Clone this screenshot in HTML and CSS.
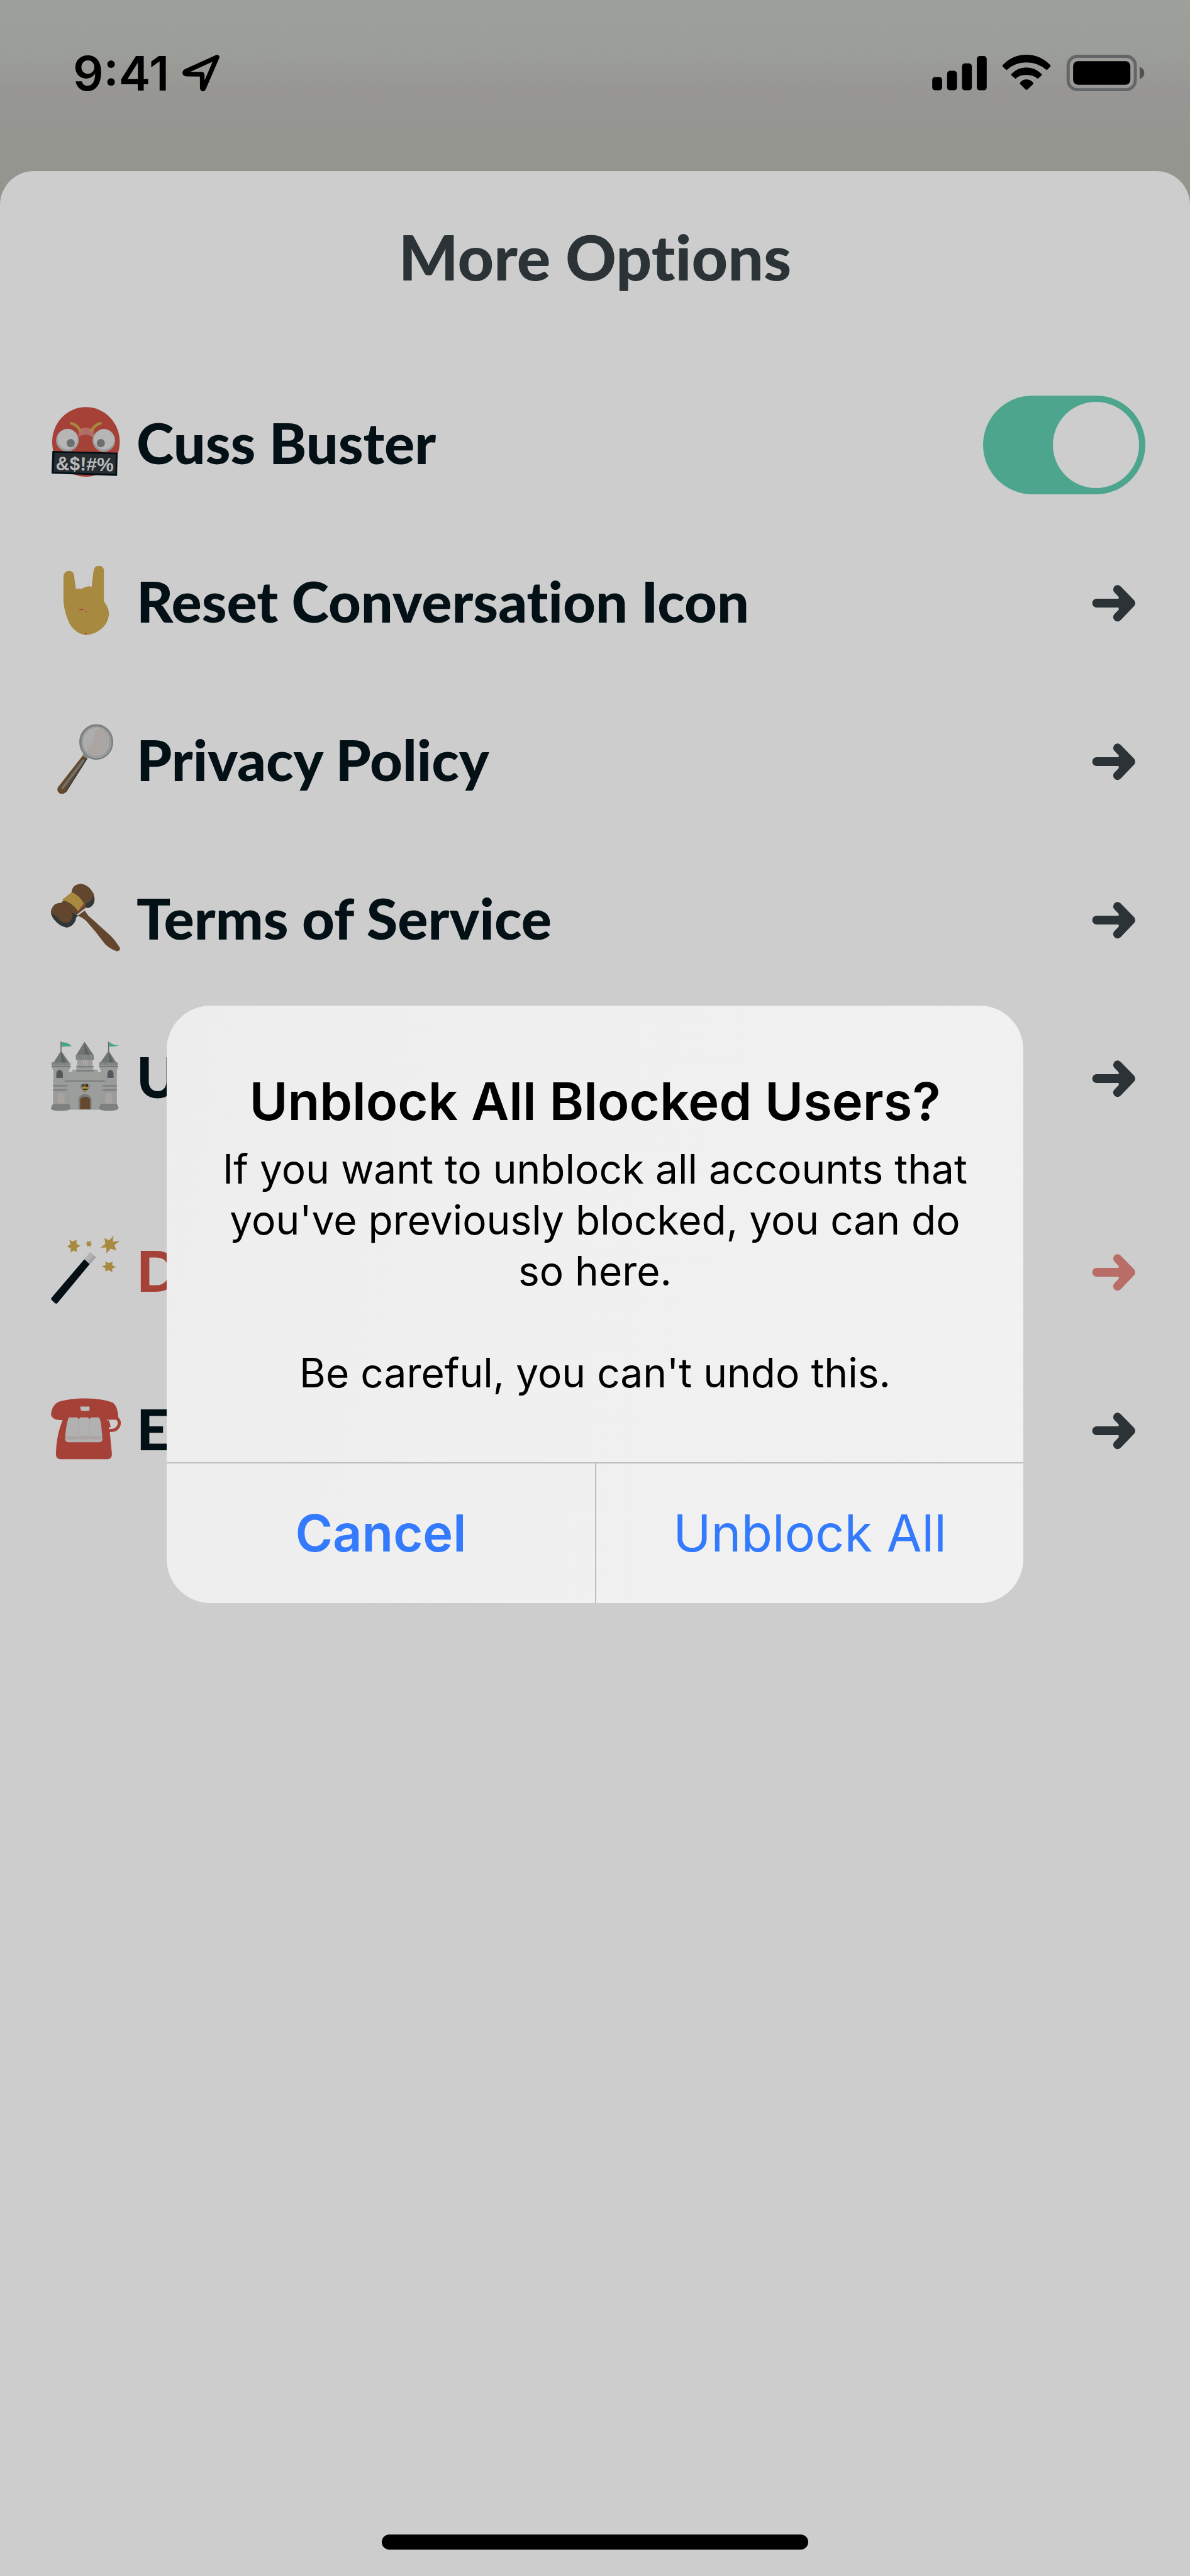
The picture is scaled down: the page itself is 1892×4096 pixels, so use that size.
FILE: index.html
```html
<!DOCTYPE html>
<html lang="en">
<head>
<meta charset="utf-8">
<meta name="viewport" content="width=device-width, initial-scale=1">
<title>More Options</title>
<link rel="stylesheet" href="styles.css">
</head>
<body>
<svg class="defs" aria-hidden="true">
  <symbol id="arrow" viewBox="0 0 86 60">
    <path d="M7.600 30H60M41.300 8L62.800 30L41.300 52.500M50 22V38" fill="none" stroke="currentColor" stroke-width="14" stroke-linecap="round" stroke-linejoin="round"/>
  </symbol>
</svg>

<div class="screen">
  <header class="status">
    <div class="status-time">
      <span>9:41</span>
      <svg class="location" viewBox="294 88 62 62" aria-hidden="true"><path d="M351 93L300 116Q297 119.500 302 120.300L325.500 120.500Q327 120.500 327 122L327.200 143Q328 146 329.500 143Z" fill="none" stroke="#000" stroke-width="7.500" stroke-linejoin="round"/></svg>
    </div>
    <svg class="indicators" viewBox="1505 86 343 64" role="img" aria-label="Signal, Wi-Fi and battery">
      <rect x="1505" y="124" width="16" height="21.500" rx="5"/>
      <rect x="1529" y="114" width="16" height="31.500" rx="5"/>
      <rect x="1553" y="102" width="16" height="43.500" rx="5"/>
      <rect x="1577" y="90" width="16" height="55.500" rx="5"/>
      <path d="M1619 104.500Q1635 88 1657 88T1695.500 104.500Q1696.800 106 1695.500 107.500L1690 113Q1676 100.500 1657 100.500T1625 113L1619 107.500Q1617.500 106 1619 104.500Z"/>
      <path d="M1633 119Q1643 108.500 1657 108.500T1681.500 119Q1682.500 120.300 1681.500 121.500L1675.500 127Q1668 120.500 1657 120.500T1639.500 127L1633 121.500Q1632 120.300 1633 119Z"/>
      <path d="M1647 133Q1651 128 1657.200 128T1668 133Q1669 134.300 1668 135.500L1658.500 144.500Q1657.300 145.500 1656 144.500L1647 135.500Q1645.800 134.300 1647 133Z"/>
      <rect x="1724.500" y="90.500" width="108.500" height="54" rx="15" fill="none" stroke="#636566" stroke-width="5"/>
      <rect x="1732.500" y="98.500" width="92.500" height="38" rx="8"/>
      <path d="M1840 107.500Q1847.500 110.500 1847.500 117.500T1840 127.500Z" fill="#4f5152"/>
    </svg>
  </header>

  <main class="sheet">
    <h1>More Options</h1>
    <nav class="options">
      <div class="row">
        <label class="name" for="cuss">
          <svg class="emoji" viewBox="60 105 348 348" aria-hidden="true">
            <ellipse cx="236" cy="278" rx="164" ry="169" fill="#a64138"/>
            <path d="M200 222Q236 196 274 222V258Q258 244 236 243T200 256Z" fill="#b06d68"/>
            <circle cx="146" cy="270" r="55" fill="#9d9d9d"/><circle cx="147" cy="264" r="49" fill="#b6b6b6"/>
            <circle cx="323" cy="271" r="55" fill="#9d9d9d"/><circle cx="324" cy="265" r="49" fill="#b6b6b6"/>
            <circle cx="162" cy="284" r="20" fill="#6c6e6f"/><circle cx="308" cy="284" r="20" fill="#6c6e6f"/>
            <path d="M165 188Q190 193 208 222M306 188Q281 193 264 222" fill="none" stroke="#a88b3f" stroke-width="13" stroke-linecap="round"/>
            <path d="M73 322L390 330L387 443L69 432Z" fill="#041016"/>
            <path d="M84 331L381 338L379 433L79 424Z" fill="#252d31"/>
            <text class="cuss" x="230" y="417" transform="rotate(1.500 230 385)">&amp;$!#%</text>
          </svg>
          <span>Cuss Buster</span>
        </label>
        <input class="switch" id="cuss" type="checkbox" role="switch" checked>
      </div>
      <a class="row" href="#reset">
        <span class="name">
          <svg class="emoji" viewBox="60 93 348 348" aria-hidden="true">
            <path d="M127 150Q129 124 153 123T179 150L187 209H217Q240 193 264 200L272 128Q274 98 299 98T323 124V270Q348 302 348 335Q342 382 306 408Q272 433 235 433Q190 430 158 382Q134 335 127 275Z" fill="#a78a3f"/>
            <path d="M204 311H224M234 321H240" stroke="#a6403d" stroke-width="5"/><path d="M230 428H240" stroke="#a6403d" stroke-width="5"/>
          </svg>
          <span>Reset Conversation Icon</span>
        </span>
        <svg class="arrow" aria-hidden="true"><use href="#arrow"/></svg>
      </a>
      <a class="row" href="#privacy">
        <span class="name">
          <svg class="emoji" viewBox="60 81 348 348" aria-hidden="true">
            <path d="M222 236L242 250L138 415Q126 429 109 421Q93 412 99 393Z" fill="#65482d"/>
            <path d="M241 252L137 416" stroke="#343b3e" stroke-width="5"/>
            <path d="M223 262L122 396" stroke="#6f7372" stroke-width="11" stroke-linecap="round"/>
            <path d="M217 236L228 224L252 240L242 252Z" fill="#8b8f8d"/>
            <ellipse cx="286" cy="172" rx="74" ry="78" fill="#adadad" stroke="#7c8080" stroke-width="17"/>
            <ellipse cx="287" cy="173" rx="70" ry="74" fill="none" stroke="#a0a3a1" stroke-width="6"/>
            <path d="M300 108Q354 125 346 180Q334 230 286 240Q248 238 236 200Q265 185 278 160Q268 122 300 108Z" fill="#aaa5a3"/>
          </svg>
          <span>Privacy Policy</span>
        </span>
        <svg class="arrow" aria-hidden="true"><use href="#arrow"/></svg>
      </a>
      <a class="row" href="#terms">
        <span class="name">
          <svg class="emoji" viewBox="60 69 348 348" aria-hidden="true">
            <path d="M196 234L230 209L246 232L352 328Q376 350 402 392Q400 407 385 406Q340 390 318 358Q285 312 245 268Q225 245 196 234Z" fill="#62472e"/>
            <path d="M166 120Q170 82 212 79Q250 84 272 125Q288 170 262 189Q250 199 236 194L180 238Q194 238 184 260Q170 288 142 291Q108 286 80 251Q60 222 68 203Q80 170 116 171Z" fill="#62472e"/>
            <path d="M236 175Q262 166 272 140Q282 170 262 189Q250 199 236 194ZM68 217Q95 238 116 262Q148 278 162 255Q176 240 166 219L200 234Q185 240 184 260Q170 288 142 291Q108 286 80 251Q68 234 68 217Z" fill="#313638"/>
            <path d="M120 157L167 120Q204 133 226 175L198 213Q172 170 120 157Z" fill="#a78a40"/>
            <path d="M198 213L226 179" stroke="#a6403a" stroke-width="4"/>
          </svg>
          <span>Terms of Service</span>
        </span>
        <svg class="arrow" aria-hidden="true"><use href="#arrow"/></svg>
      </a>
      <a class="row" href="#unblock">
        <span class="name">
          <svg class="emoji" viewBox="60 87 348 348" aria-hidden="true">
            <path d="M115 94V142M346 94V142" stroke="#696c6c" stroke-width="5"/>
            <path d="M118 96Q150 96 167 116L118 118ZM349 96Q366 110 398 114L349 119Z" fill="#46a58a"/>
            <path d="M115 138L158 200H76ZM229 94L274 160H188ZM346 138L386 200H303Z" fill="#717474"/>
            <path d="M115 142L140 198H118ZM229 100L252 156H230ZM346 142L370 198H348Z" fill="#5d6161"/>
            <path d="M135 240H170V230H186V242H274V230H294V242H325V424H135Z" fill="#9b9e9b"/>
            <path d="M187 158H275V182H268V224H273V246H188V224H194V182H187Z" fill="#999c9a"/>
            <path d="M70 196H161V218L153 236L158 400H76L78 236L70 218ZM301 196H391V218L386 236V400H306L308 236L301 218Z" fill="#9a9c9b"/>
            <path d="M98 345H132V398H98ZM330 345H364V398H330ZM218 182H245V210H218Z" fill="#a8a2a1"/>
            <path d="M70 202H161M301 202H391M187 165H275" stroke="#7a7d7d" stroke-width="15" stroke-dasharray="8 3"/>
            <path d="M72 215H160M303 215H389M190 178H273M190 216H272M190 236H272M78 308H142M78 329H142M320 308H384M320 329H384M135 285H325" stroke="#757979" stroke-width="6" stroke-linecap="round"/>
            <path d="M76 395H154L163 416Q160 430 112 430T66 416ZM308 395H386L395 416Q390 430 346 430T299 416Z" fill="#7d8080"/>
            <path d="M92 270V250Q94 231 108 231T124 250V270ZM340 270V250Q342 231 355 231T370 250V270Z" fill="#54585a"/>
            <path d="M200 422V372Q205 349 231 349T263 372V422Z" fill="#7b7d7b"/>
            <path d="M208 422V375Q212 361 231 361T256 375V422Z" fill="#65492e"/>
            <path d="M207 304Q220 303 231 294Q242 303 255 304Q253 327 231 341Q210 328 207 304Z" fill="#777a78"/>
            <path d="M215 306L231 300L248 306Q248 325 231 338Q216 328 215 306Z" fill="#ad8838"/>
            <path d="M216 301L231 303L246 299V313H234V307H228V311H217ZM222 323H242V328H222Z" fill="#34302a"/>
          </svg>
          <span>U</span>
        </span>
        <svg class="arrow" aria-hidden="true"><use href="#arrow"/></svg>
      </a>
      <a class="row danger" href="#delete">
        <span class="name">
          <svg class="emoji" viewBox="60 94 348 348" aria-hidden="true">
            <path d="M229 216L255 240L96 431Q90 434 84 429L68 413Q66 408 69 404Z" fill="#041016"/>
            <path d="M256 182L286 208L256 242L228 217Z" fill="#b2b2b2"/><path d="M284 207L254 240L244 231L274 199Z" fill="#a3a3a3"/>
            <path d="M155 122L172 131L190 122V142L209 152L190 163L193 182L177 174L161 185L163 164L144 155L161 144Z" fill="#a78a40"/>
            <path d="M370 102L366 132L401 127L374 148L383 174L356 166L335 189L335 160L307 161L330 142L326 114L348 126Z" fill="#a78a40"/>
            <path d="M240 128L250 132L261 126L259 138L265 144L258 148L259 157L250 152L240 155L242 146L235 141L242 137Z" fill="#a78a40"/>
            <path d="M330 228L348 235L365 229L363 246L382 255L363 263L364 280L347 270L329 276L331 260L311 252L332 246Z" fill="#a78a40"/>
          </svg>
          <span>D</span>
        </span>
        <svg class="arrow" aria-hidden="true"><use href="#arrow"/></svg>
      </a>
      <a class="row" href="#email">
        <span class="name">
          <svg class="emoji" viewBox="60 81 348 348" aria-hidden="true">
            <path d="M341 218Q348 232 350 250" fill="none" stroke="#a64138" stroke-width="12"/>
            <path d="M388 208Q402 222 396 240Q388 268 348 266" fill="none" stroke="#a64138" stroke-width="15"/>
            <path d="M66 190Q70 142 104 126Q160 110 235 110T366 130Q392 150 393 205L385 214H338Q346 240 352 275L362 380Q362 404 342 405H110Q90 402 90 380Q92 290 123 215Q74 218 66 190Z" fill="#a64138"/>
            <path d="M208 150H253V168Q250 171 231 171T211 167Z" fill="#bdbdbd"/>
            <path d="M152 202H195L201 212L208 202H247L253 212L260 202H300Q308 218 310 238L316 306Q316 322 300 323H150Q135 321 135 306Q138 240 152 202Z" fill="#b1b1b1"/>
            <path d="M140 292H194L201 299L208 292H247L253 299L260 292H313V304L300 310H264L253 305L242 310H214L203 305L192 310H148L138 302Z" fill="#aaa4a3"/>
            <path d="M201 210Q195 222 201 235T201 265T201 290M253 210Q259 222 253 235T253 265T253 290" fill="none" stroke="#a5a5a5" stroke-width="3"/>
          </svg>
          <span>E</span>
        </span>
        <svg class="arrow" aria-hidden="true"><use href="#arrow"/></svg>
      </a>
    </nav>
    <div class="home-indicator"></div>
  </main>
</div>

<div class="overlay">
  <section class="alert" role="alertdialog" aria-labelledby="alert-title" aria-describedby="alert-text">
    <div class="alert-body">
      <h2 id="alert-title">Unblock All Blocked Users?</h2>
      <div class="message" id="alert-text">
        <p>If you want to unblock all accounts that you've previously blocked, you can do so here.</p>
        <p>Be careful, you can't undo this.</p>
      </div>
    </div>
    <div class="actions">
      <button class="cancel" type="button">Cancel</button>
      <button class="confirm" type="button">Unblock All</button>
    </div>
  </section>
</div>
</body>
</html>
```
FILE: styles.css
```css
* {
  box-sizing: border-box;
}

body {
  margin: 0;
  color: #000;
  font-family: Inter, "Liberation Sans", sans-serif;
}

h1,
h2,
p {
  margin: 0;
}

.defs {
  display: none;
}

.screen {
  display: flex;
  flex-direction: column;
  min-height: 100vh;
  background: linear-gradient(#9da09b 0, #9b9d98 90px, #979694 150px, #94968f 230px, #92948d 330px);
}

/* Status bar */
.status {
  display: flex;
  align-items: center;
  justify-content: space-between;
  height: 272px;
  padding: 0 72px 40px 116px;
}

.status-time {
  display: flex;
  align-items: center;
  gap: 20px;
  font-size: 76px;
  font-weight: 600;
  line-height: 96px;
}

.location {
  width: 61px;
  height: 61px;
}

.indicators {
  width: 338px;
  height: 63px;
}

/* Sheet */
.sheet {
  display: flex;
  flex: 1;
  flex-direction: column;
  padding-top: 75px;
  border-radius: 54px 54px 0 0;
  background: #cdcdcd;
  font-variant-ligatures: none;
}

h1 {
  margin-bottom: 114px;
  color: #2b3336;
  font-family: Lato, "Open Sans", sans-serif;
  font-size: 100px;
  font-weight: 900;
  line-height: 120px;
  text-align: center;
}

.row {
  display: flex;
  align-items: center;
  justify-content: space-between;
  height: 252px;
  padding: 0 71px 0 79px;
  color: #031015;
  font-family: Lato, "Open Sans", sans-serif;
  font-size: 90px;
  font-weight: 900;
  line-height: 112px;
  text-decoration: none;
}

.name {
  display: flex;
  align-items: center;
  gap: 24px;
  padding-bottom: 9px;
}

.emoji {
  width: 114px;
  height: 114px;
}

.cuss {
  fill: #b9b9b9;
  font-family: "Liberation Sans", sans-serif;
  font-size: 92px;
  font-weight: 700;
  text-anchor: middle;
}

.arrow {
  width: 85px;
  height: 60px;
  color: #2b3336;
}

.danger {
  margin-top: 56px;
  color: #a64138;
}

.danger .arrow {
  color: #b86d67;
}

.switch {
  display: flex;
  align-items: center;
  justify-content: flex-end;
  width: 258px;
  height: 157px;
  margin: 0;
  padding: 10px;
  border-radius: 79px;
  background: #4ca58c;
  appearance: none;
}

.switch::before {
  width: 137px;
  height: 137px;
  border-radius: 50%;
  background: #cdcdcd;
  content: "";
}

.switch:not(:checked) {
  justify-content: flex-start;
  background: #a3a3a3;
}

.home-indicator {
  align-self: center;
  width: 678px;
  height: 24px;
  margin: auto 0 42px;
  border-radius: 12px;
  background: #000;
}

/* Alert */
.overlay {
  position: absolute;
  inset: 0;
  display: flex;
  align-items: center;
  justify-content: center;
  padding-top: 52px;
}

.alert {
  width: 72%;
  overflow: hidden;
  border-radius: 70px;
  background: linear-gradient(100deg, #ededed, #f0f0f0 45%, #f1f1f1);
}

.alert-body {
  padding: 102px 80px;
  text-align: center;
}

h2 {
  margin-bottom: 17px;
  font-size: 83px;
  font-weight: 600;
  line-height: 100px;
}

.message {
  display: grid;
  gap: 81px;
  font-size: 64px;
  line-height: 81px;
}

.actions {
  display: grid;
  grid-template-columns: 1fr 1fr;
  border-top: 2px solid #bebebe;
}

.actions button {
  height: 222px;
  padding: 0;
  border: 0;
  background: none;
  color: #337afc;
  font: inherit;
  font-size: 81px;
}

.actions .cancel {
  font-weight: 600;
}

.actions .confirm {
  border-left: 2px solid #bebebe;
}
```
